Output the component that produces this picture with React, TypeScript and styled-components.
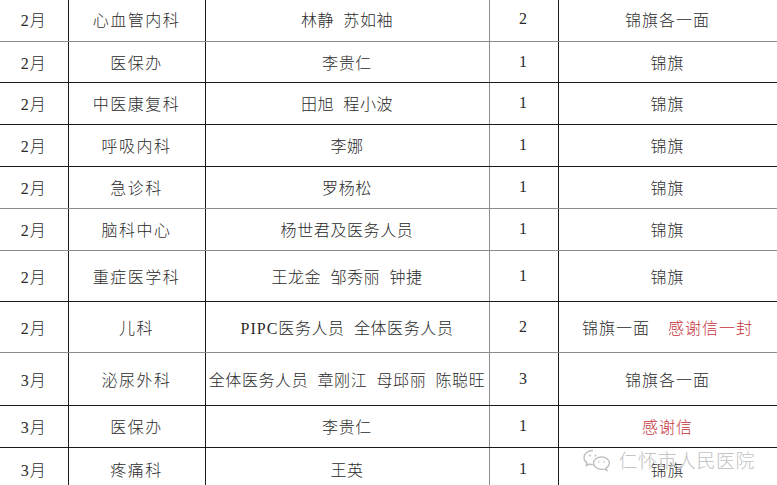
import React from 'react'
import styled, { createGlobalStyle } from 'styled-components'

const GlobalStyle = createGlobalStyle`
  html, body {
    margin: 0;
    padding: 0;
    background: #ffffff;
    overflow: hidden;
  }
`

const Page = styled.div`
  position: relative;
  width: 777px;
  height: 485px;
  overflow: hidden;
  background: #fff;
`

const Table = styled.table`
  margin-top: -2px;
  width: 777px;
  border-collapse: collapse;
  table-layout: fixed;
  font-family: 'Liberation Serif', 'Noto Sans CJK SC', serif;
  font-size: 16px;
  font-weight: 300;
  color: #2b2b2b;
`

const Row = styled.tr<{ $h: number; $line: 'dark' | 'grey' }>`
  height: ${({ $h }) => $h}px;

  td {
    border-bottom: 1px solid ${({ $line }) => ($line === 'grey' ? '#8c8c8c' : '#1a1a1a')};
  }
`

const Cell = styled.td<{ $spacing?: number }>`
  padding: 0;
  text-align: center;
  vertical-align: middle;
  white-space: pre;
  letter-spacing: ${({ $spacing = 1 }) => $spacing}px;
  border-right: 1px solid #1a1a1a;

  &:nth-child(3) {
    border-right-color: #8c8c8c;
  }
  &:last-child {
    border-right-color: #333;
  }
`

const Latin = styled.span`
  font-family: 'Liberation Serif', serif;
  font-weight: 400;
  letter-spacing: 1px;
`

const Red = styled.span`
  color: #c4323a;
`

const Gap = styled.span`
  display: inline-block;
  width: 18px;
`

const Watermark = styled.div`
  position: absolute;
  right: 22px;
  bottom: 12px;
  display: flex;
  align-items: center;
  gap: 6px;
  color: #c4c4c4;
  font-family: 'Noto Sans CJK SC', sans-serif;
  font-weight: 300;
  font-size: 19px;
  letter-spacing: 0.5px;
  text-shadow: 0 0 2px #fff, 0 0 2px #fff;
  pointer-events: none;
`

const WeChatIcon = () => (
  <svg width="30" height="24" viewBox="0 0 30 24" fill="none" stroke="#bdbdbd" strokeWidth="1.3">
    <path d="M11 2.5c-5 0-9 3.2-9 7.2 0 2.2 1.2 4.1 3.1 5.4l-.8 2.6 3-1.6c1.1.3 2.3.5 3.6.5" />
    <circle cx="8" cy="7.5" r="0.9" fill="#bdbdbd" stroke="none" />
    <circle cx="13.5" cy="7.5" r="0.9" fill="#bdbdbd" stroke="none" />
    <path d="M19.5 8.8c-4.4 0-8 2.8-8 6.3s3.6 6.3 8 6.3c1 0 1.9-.1 2.8-.4l2.6 1.4-.7-2.3c1.9-1.2 3.2-3 3.2-5 0-3.5-3.5-6.3-7.9-6.3z" />
    <circle cx="16.8" cy="14" r="0.8" fill="#bdbdbd" stroke="none" />
    <circle cx="22" cy="14" r="0.8" fill="#bdbdbd" stroke="none" />
  </svg>
)

type Award = { text: string; red?: string }
type Item = {
  month: string
  dept: string
  latin?: string
  names: string
  count: string
  award: Award
  h: number
  line: 'dark' | 'grey'
}

const rows: Item[] = [
  { month: '2月', dept: '心血管内科', names: '林静  苏如袖', count: '2', award: { text: '锦旗各一面' }, h: 43, line: 'grey' },
  { month: '2月', dept: '医保办', names: '李贵仁', count: '1', award: { text: '锦旗' }, h: 41, line: 'dark' },
  { month: '2月', dept: '中医康复科', names: '田旭  程小波', count: '1', award: { text: '锦旗' }, h: 42, line: 'dark' },
  { month: '2月', dept: '呼吸内科', names: '李娜', count: '1', award: { text: '锦旗' }, h: 42, line: 'dark' },
  { month: '2月', dept: '急诊科', names: '罗杨松', count: '1', award: { text: '锦旗' }, h: 42, line: 'grey' },
  { month: '2月', dept: '脑科中心', names: '杨世君及医务人员', count: '1', award: { text: '锦旗' }, h: 42, line: 'grey' },
  { month: '2月', dept: '重症医学科', names: '王龙金  邹秀丽  钟捷', count: '1', award: { text: '锦旗' }, h: 51, line: 'dark' },
  { month: '2月', dept: '儿科', latin: 'PIPC', names: '医务人员  全体医务人员', count: '2', award: { text: '锦旗一面', red: '感谢信一封' }, h: 51, line: 'grey' },
  { month: '3月', dept: '泌尿外科', names: '全体医务人员  章刚江  母邱丽  陈聪旺', count: '3', award: { text: '锦旗各一面' }, h: 53, line: 'dark' },
  { month: '3月', dept: '医保办', names: '李贵仁', count: '1', award: { text: '', red: '感谢信' }, h: 42, line: 'dark' },
  { month: '3月', dept: '疼痛科', names: '王英', count: '1', award: { text: '锦旗' }, h: 44, line: 'dark' },
]

export default function App() {
  return (
    <Page>
      <GlobalStyle />
      <Table>
        <colgroup>
          <col style={{ width: 68 }} />
          <col style={{ width: 137 }} />
          <col style={{ width: 284 }} />
          <col style={{ width: 69 }} />
          <col style={{ width: 219 }} />
        </colgroup>
        <tbody>
          {rows.map((r, i) => (
            <Row key={i} $h={r.h} $line={r.line}>
              <Cell>{r.month}</Cell>
              <Cell $spacing={1.5}>{r.dept}</Cell>
              <Cell $spacing={0.6}>
                {r.latin && <Latin>{r.latin}</Latin>}
                {r.names}
              </Cell>
              <Cell>{r.count}</Cell>
              <Cell>
                {r.award.text}
                {r.award.text && r.award.red && <Gap />}
                {r.award.red && <Red>{r.award.red}</Red>}
              </Cell>
            </Row>
          ))}
        </tbody>
      </Table>
      <Watermark>
        <WeChatIcon />
        <span>仁怀市人民医院</span>
      </Watermark>
    </Page>
  )
}
